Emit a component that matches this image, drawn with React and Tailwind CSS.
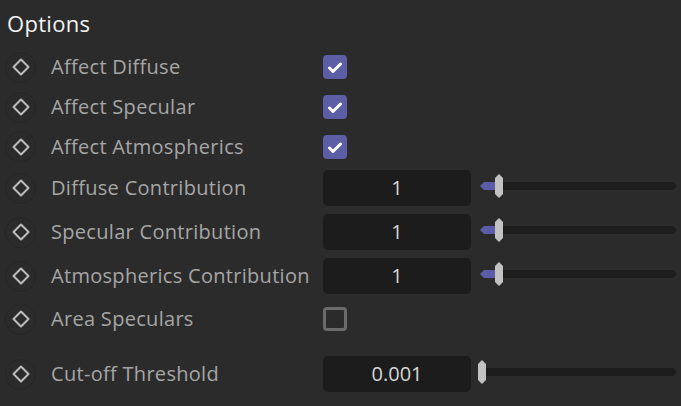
import React from 'react'

const font = { fontFamily: '"Open Sans", "Noto Sans", sans-serif' }

function KeyIcon() {
  return (
    <div className="w-[31px] h-[31px] ml-[5px] rounded-full border border-[#262626] flex items-center justify-center shrink-0">
      <svg width="20" height="20" viewBox="0 0 20 20">
        <polygon points="10,2.5 17.5,10 10,17.5 2.5,10" fill="none" stroke="#bdbdbd" strokeWidth="2" strokeLinejoin="round" />
      </svg>
    </div>
  )
}

function Checkbox({ checked }) {
  if (!checked) {
    return <div className="w-[24px] h-[24px] rounded-[4px] border-[3px] border-[#6b6b6b]" />
  }
  return (
    <div className="w-[24px] h-[24px] rounded-[4px] bg-[#5c5fa6]">
      <svg width="24" height="24" viewBox="0 0 24 24">
        <path d="M6.5 13 L10 16.5 L17.5 9" fill="none" stroke="#ffffff" strokeWidth="3" strokeLinecap="round" strokeLinejoin="round" />
      </svg>
    </div>
  )
}

function Slider({ value }) {
  // track with pointed ends, blue fill up to the thumb
  return (
    <div className="relative flex-1 h-[24px] ml-[9px] mr-[4px] mb-[5px]">
      <div className="absolute left-[3px] right-[4px] top-[8px] h-[8px] bg-[#1d1d1d]" />
      <div className="absolute right-0 top-[8px] w-0 h-0 border-y-[4px] border-y-transparent border-l-[4px] border-l-[#1d1d1d]" />
      {value > 0 && (
        <>
          <div className="absolute left-[4px] top-[8px] w-[12px] h-[8px] bg-[#5a5da6]" />
          <div className="absolute left-0 top-[8px] w-0 h-0 border-y-[4px] border-y-transparent border-r-[4px] border-r-[#5a5da6]" />
        </>
      )}
      <svg className="absolute top-0" style={{ left: value > 0 ? 15 : -2 }} width="8" height="24" viewBox="0 0 8 24">
        <polygon points="4,0 8,4 8,20 4,24 0,20 0,4" fill="#c2c2c2" />
      </svg>
    </div>
  )
}

function NumberField({ value }) {
  return (
    <div className="w-[148px] h-[36px] rounded-[5px] bg-[#1c1c1c] flex items-center justify-center text-[20px] text-[#d6d6d6] shrink-0">
      {value}
    </div>
  )
}

function Row({ label, height, children, className = '' }) {
  return (
    <div className={`flex items-center ${className}`} style={{ height }}>
      <KeyIcon />
      <div className="w-[287px] shrink-0 pl-[15px] text-[20px] tracking-[0.3px] text-[#a6a6a6] whitespace-nowrap">{label}</div>
      {children}
    </div>
  )
}

export default function App() {
  return (
    <div className="w-[681px] h-[406px] bg-[#2b2b2b] overflow-hidden" style={font}>
      <div className="h-[47px] flex items-center pl-[7px] text-[22px] tracking-[0.3px] text-[#f2f2f2]">Options</div>
      <Row label="Affect Diffuse" height={40}><Checkbox checked /></Row>
      <Row label="Affect Specular" height={40}><Checkbox checked /></Row>
      <Row label="Affect Atmospherics" height={39}><Checkbox checked /></Row>
      <Row label="Diffuse Contribution" height={44}><NumberField value="1" /><Slider value={1} /></Row>
      <Row label="Specular Contribution" height={44}><NumberField value="1" /><Slider value={1} /></Row>
      <Row label="Atmospherics Contribution" height={44}><NumberField value="1" /><Slider value={1} /></Row>
      <Row label="Area Speculars" height={42}><Checkbox /></Row>
      <Row label="Cut-off Threshold" height={44} className="mt-[12px]"><NumberField value="0.001" /><Slider value={0} /></Row>
    </div>
  )
}
